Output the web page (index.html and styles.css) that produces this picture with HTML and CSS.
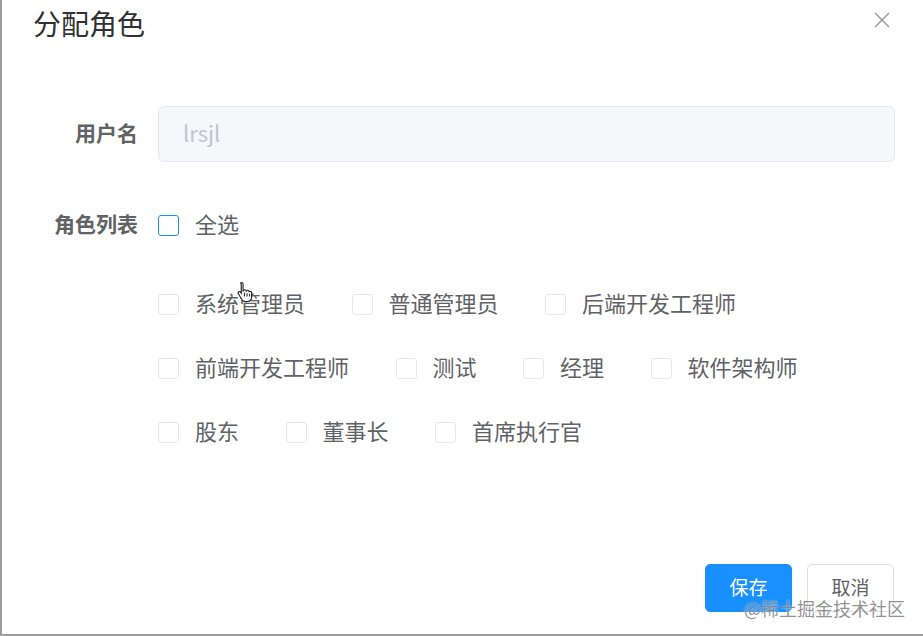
FILE: index.html
```html
<!DOCTYPE html>
<html lang="zh-CN">
<head>
<meta charset="utf-8">
<title>分配角色</title>
<link rel="stylesheet" href="styles.css">
</head>
<body>
<div class="dialog">
  <header class="dialog-header">
    <span class="dialog-title">分配角色</span>
    <svg class="close" viewBox="0 0 16 16" width="16" height="16"><path d="M1 1L15 15M15 1L1 15" stroke="#909399" stroke-width="1.4" fill="none"/></svg>
  </header>
  <form class="form">
    <label class="form-label label-input">用户名</label>
    <div class="input">lrsjl</div>

    <label class="form-label label-check">角色列表</label>
    <div class="check-all">
      <span class="checkbox checkbox-hover"></span><span class="check-text">全选</span>
    </div>

    <span class="form-label"></span>
    <div class="check-group">
      <div class="check-item"><span class="checkbox"></span><span class="check-text">系统管理员</span></div>
      <div class="check-item"><span class="checkbox"></span><span class="check-text">普通管理员</span></div>
      <div class="check-item"><span class="checkbox"></span><span class="check-text">后端开发工程师</span></div>
      <div class="check-item"><span class="checkbox"></span><span class="check-text">前端开发工程师</span></div>
      <div class="check-item"><span class="checkbox"></span><span class="check-text">测试</span></div>
      <div class="check-item"><span class="checkbox"></span><span class="check-text">经理</span></div>
      <div class="check-item"><span class="checkbox"></span><span class="check-text">软件架构师</span></div>
      <div class="check-item"><span class="checkbox"></span><span class="check-text">股东</span></div>
      <div class="check-item"><span class="checkbox"></span><span class="check-text">董事长</span></div>
      <div class="check-item"><span class="checkbox"></span><span class="check-text">首席执行官</span></div>
    </div>
  </form>
  <footer class="dialog-footer">
    <button class="btn btn-primary" type="button">保存</button>
    <button class="btn" type="button">取消</button>
  </footer>
  <div class="watermark">@稀土掘金技术社区</div>
  <svg class="cursor" viewBox="0 0 14 19" width="16" height="22"><path d="M4 1.2c.8 0 1.3.5 1.3 1.3v6l.2-.1c.2-.6.7-.9 1.3-.9.7 0 1.2.5 1.3 1.1.3-.4.7-.6 1.2-.6.7 0 1.2.5 1.3 1.2.2-.2.5-.3.9-.3.8 0 1.3.6 1.3 1.4v3.4c0 2.6-1.6 4.2-4.2 4.2H7.5c-1.5 0-2.5-.6-3.3-1.8L1.2 11c-.5-.7-.3-1.5.3-1.8.6-.3 1.2-.1 1.6.4l.6.9V2.5C2.7 1.7 3.2 1.2 4 1.2z" fill="#fff" stroke="#222" stroke-width="1"/><path d="M6.5 10v3.5M8.8 10.5v3M11 11v2.5" stroke="#222" stroke-width=".9"/></svg>
</div>
</body>
</html>
```

FILE: styles.css
```css
* { box-sizing: border-box; }

html, body {
  margin: 0;
  padding: 0;
  background: #ffffff;
}

body {
  font-family: "Noto Sans CJK SC", "Noto Sans", sans-serif;
  color: #606266;
}

.dialog {
  position: relative;
  width: 923px;
  height: 636px;
  border-left: 2px solid #9c9c9c;
  border-bottom: 2px solid #9c9c9c;
  background: #ffffff;
  display: flex;
  flex-direction: column;
}

.dialog-header {
  display: flex;
  justify-content: space-between;
  align-items: flex-start;
  padding: 6px 33px 0 31px;
  height: 40px;
}

.dialog-title {
  font-size: 28px;
  line-height: 34px;
  color: #303133;
}

.close {
  margin-top: 6px;
}

.form {
  margin-top: 66px;
  padding-right: 28px;
  display: grid;
  grid-template-columns: 156px 1fr;
  align-items: center;
}

.form-label {
  text-align: right;
  padding-right: 20px;
  font-size: 21px;
  font-weight: 700;
  color: #606266;
}

.label-input {
  line-height: 52px;
  padding-bottom: 4px;
}

.input {
  height: 56px;
  line-height: 50px;
  padding-left: 24px;
  padding-bottom: 4px;
  border: 1px solid #e4e7ed;
  border-radius: 6px;
  background: #f5f7fa;
  color: #c0c4cc;
  font-size: 22px;
}

.label-check {
  margin-top: 43px;
  line-height: 36px;
  padding-bottom: 4px;
}

.check-all {
  margin-top: 43px;
  height: 40px;
  display: flex;
  align-items: center;
}

.check-group {
  margin-top: 39px;
  display: flex;
  flex-wrap: wrap;
  row-gap: 24px;
}

.check-item {
  display: flex;
  align-items: center;
  height: 40px;
  margin-right: 46.5px;
}

.checkbox {
  display: inline-block;
  width: 21px;
  height: 21px;
  border: 1px solid #e4e7ed;
  border-radius: 3px;
  background: #ffffff;
  flex: none;
}

.checkbox-hover {
  border-color: #1a8cfe;
}

.check-text {
  margin-left: 16px;
  font-size: 22px;
  line-height: 36px;
  padding-bottom: 4px;
  color: #606266;
  white-space: nowrap;
}

.dialog-footer {
  margin-top: auto;
  display: flex;
  justify-content: flex-end;
  gap: 15px;
  padding: 0 29px 22px 0;
}

.btn {
  height: 48px;
  padding: 0 23.5px 3px;
  border: 1px solid #dcdfe6;
  border-radius: 5px;
  background: #ffffff;
  color: #606266;
  font-family: "Noto Sans CJK SC", "Noto Sans", sans-serif;
  font-size: 19px;
  line-height: 42px;
}

.btn-primary {
  background: #1890ff;
  border-color: #1890ff;
  color: #ffffff;
}

.watermark {
  position: absolute;
  right: 18px;
  bottom: 15px;
  font-size: 18px;
  line-height: 22px;
  color: rgba(110, 110, 110, 0.75);
  text-shadow: 0 0 2px rgba(255, 255, 255, 0.9);
  white-space: nowrap;
}

.cursor {
  position: absolute;
  left: 235px;
  top: 281px;
}
```
